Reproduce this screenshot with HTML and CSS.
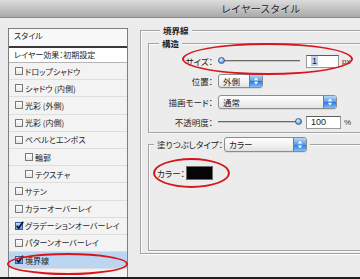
FILE: index.html
```html
<!DOCTYPE html>
<html>

<head>
    <meta charset="UTF-8">
    <meta name="viewport" content="width=device-width, initial-scale=1.0">
    <title>レイヤースタイル</title>
    <link rel="stylesheet" href="styles.css">
</head>

<body>
    <div class="window">
        <div class="titlebar">レイヤースタイル</div>
        <div class="content">
            <div class="style-list">
                <div class="list-head">スタイル</div>
                <div class="list-default">レイヤー効果：初期設定</div>
                <div class="list-item"><span class="check"></span>ドロップシャドウ</div>
                <div class="list-item"><span class="check"></span>シャドウ (内側)</div>
                <div class="list-item"><span class="check"></span>光彩 (外側)</div>
                <div class="list-item"><span class="check"></span>光彩 (内側)</div>
                <div class="list-item"><span class="check"></span>ベベルとエンボス</div>
                <div class="list-item indent"><span class="check"></span>輪郭</div>
                <div class="list-item indent"><span class="check"></span>テクスチャ</div>
                <div class="list-item"><span class="check"></span>サテン</div>
                <div class="list-item"><span class="check"></span>カラーオーバーレイ</div>
                <div class="list-item"><span class="check on"><svg viewBox="0 0 8 8"><path d="M1.5 4.2 L3.3 6.3 L7.2 0.6" /></svg></span>グラデーションオーバーレイ</div>
                <div class="list-item"><span class="check"></span>パターンオーバーレイ</div>
                <div class="list-item selected"><span class="check on"><svg viewBox="0 0 8 8"><path d="M1.5 4.2 L3.3 6.3 L7.2 0.6" /></svg></span>境界線</div>
            </div>

            <div class="settings">
                <div class="group outer">
                    <div class="group-title bold">境界線</div>

                    <div class="group structure">
                        <div class="group-title bold">構造</div>
                        <div class="form">
                            <div class="label">サイズ：</div>
                            <div class="control">
                                <div class="slider"><span class="knob"></span></div>
                                <span class="field"><span class="sel">1</span></span>
                                <span class="unit">px</span>
                            </div>

                            <div class="label">位置：</div>
                            <div class="control">
                                <span class="popup short">外側<svg class="stepper" viewBox="0 0 12 14"><path d="M3.5 6 L6 3 L8.5 6 Z M3.5 8 L6 11 L8.5 8 Z" /></svg></span>
                            </div>

                            <div class="label">描画モード：</div>
                            <div class="control">
                                <span class="popup long">通常<svg class="stepper" viewBox="0 0 12 14"><path d="M3.5 6 L6 3 L8.5 6 Z M3.5 8 L6 11 L8.5 8 Z" /></svg></span>
                            </div>

                            <div class="label">不透明度：</div>
                            <div class="control">
                                <div class="slider end"><span class="knob"></span></div>
                                <span class="field wide">100</span>
                                <span class="unit">%</span>
                            </div>
                        </div>
                    </div>

                    <div class="group fill">
                        <div class="group-title">塗りつぶしタイプ：<span class="popup mid">カラー<svg class="stepper" viewBox="0 0 12 14"><path d="M3.5 6 L6 3 L8.5 6 Z M3.5 8 L6 11 L8.5 8 Z" /></svg></span></div>
                        <div class="color-row">カラー：<span class="swatch"></span></div>
                    </div>
                </div>
            </div>
        </div>

        <!-- red marks drawn over the screenshot -->
        <div class="mark mark-size"></div>
        <div class="mark mark-color"></div>
        <div class="mark mark-stroke"></div>
    </div>
</body>

</html>
```

FILE: styles.css
```css
body {
    margin: 0;
    background-color: #ececec;
    font-family: "Noto Sans CJK JP", "Noto Sans", sans-serif;
    color: #1c1c1c;
}

.window {
    position: relative;
    width: 360px;
    height: 279px;
    box-sizing: border-box;
    border-bottom: 2px solid #1e1e1e;
    overflow: hidden;
    display: flex;
    flex-direction: column;
    background-color: #ececec;
}

.titlebar {
    height: 17px;
    line-height: 17px;
    padding-left: 221px;
    font-size: 10px;
    color: #222;
    background: linear-gradient(to bottom, #dcdcdc, #b9b9b9 70%, #a9a9a9);
    border-bottom: 1px solid #8a8a8a;
    text-shadow: 0 1px 0 rgba(255,255,255,0.4);
}

.content {
    flex: 1;
    display: flex;
    align-items: flex-start;
    padding: 10px 0 0 8px;
    min-height: 0;
}

/* left column */
.style-list {
    width: 120px;
    height: 100%;
    box-sizing: border-box;
    border: 1px solid #7e7e7e;
    border-bottom: none;
    background-color: #f3f3f3;
    font-size: 8px;
    font-feature-settings: "palt";
    flex-shrink: 0;
}

.list-head {
    height: 17px;
    line-height: 13px;
    padding-left: 5px;
    background-color: #f8f8f8;
    border-bottom: 2px solid #3a3a3a;
}

.list-default {
    height: 15px;
    line-height: 14px;
    padding-left: 5px;
    box-sizing: border-box;
    background-color: #fff;
    border-bottom: 1px solid #b4b4b4;
}

.list-item {
    height: 17.2px;
    box-sizing: border-box;
    display: flex;
    align-items: center;
    padding-left: 6px;
    border-bottom: 1px solid #dedede;
}

.list-item.indent {
    padding-left: 16px;
}

.list-item.selected {
    background-color: #bcd5f1;
}

.check {
    width: 8px;
    height: 8px;
    box-sizing: border-box;
    margin-right: 2px;
    border: 1px solid #7a7a7a;
    background: linear-gradient(to bottom, #fff, #e4e4e4);
    flex-shrink: 0;
    position: relative;
}

.check.on {
    border-color: #35609a;
    background: linear-gradient(to bottom, #c9defa, #5a95e0);
}

.check svg {
    position: absolute;
    left: -1px;
    top: -2px;
    width: 9px;
    height: 9px;
    fill: none;
    stroke: #101830;
    stroke-width: 1.6;
}

/* right column */
.settings {
    margin: 2px 0 0 12px;
    font-size: 8.5px;
    font-feature-settings: "palt";
}

.group {
    border: 1px solid #a4a4a4;
    box-shadow: inset 1px 1px 0 #fbfbfb, 1px 1px 0 #fbfbfb;
    display: flex;
    flex-direction: column;
}

.group.outer {
    width: 240px;
    height: 224px;
    box-sizing: border-box;
    padding: 0 0 2px 7px;
}

.group-title {
    align-self: flex-start;
    line-height: 12px;
    margin: -7px 0 0 12px;
    padding: 0 3px;
    background-color: #ececec;
}

.bold {
    font-weight: bold;
}

.structure {
    margin-top: 7px;
    padding-bottom: 3px;
}

.structure .group-title {
    margin-left: 10px;
}

.form {
    margin-top: 5px;
    display: grid;
    grid-template-columns: 64px 1fr;
    grid-auto-rows: 14px;
    column-gap: 5px;
    row-gap: 6.4px;
}

.label {
    text-align: right;
    line-height: 14px;
}

.control {
    display: flex;
    align-items: center;
}

.slider {
    width: 82px;
    height: 14px;
    display: flex;
    align-items: center;
    background: linear-gradient(to bottom, transparent 6px, #6a6a6a 6px, #6a6a6a 7px, #c4c4c4 7px, #c4c4c4 8px, transparent 8px);
}

.slider.end {
    justify-content: flex-end;
    width: 84px;
}

.knob {
    width: 7px;
    height: 7px;
    box-sizing: border-box;
    margin-top: -2px;
    border-radius: 50% 50% 50% 50%;
    border: 1px solid #3c5f8e;
    background: radial-gradient(circle at 40% 35%, #eaf4ff, #77aee8 55%, #3570bd);
}

.field {
    width: 33px;
    height: 13px;
    box-sizing: border-box;
    margin-left: 6px;
    padding-left: 4px;
    line-height: 11px;
    font-family: "Liberation Sans", Arial, sans-serif;
    font-size: 9px;
    background-color: #fff;
    border: 1px solid #9a9a9a;
    border-top-color: #5c5c5c;
}

.control .slider.end + .field {
    margin-left: 4px;
}

.field.wide {
    width: 35px;
}

.sel {
    background-color: #b8d4f4;
    padding: 0 1px;
}

.unit {
    margin-left: 3px;
    font-family: "Liberation Sans", Arial, sans-serif;
    font-size: 8px;
    color: #333;
}

.popup {
    height: 14px;
    box-sizing: border-box;
    display: inline-flex;
    align-items: center;
    justify-content: space-between;
    padding-left: 4px;
    border: 1px solid #8c8c8c;
    border-radius: 3px;
    background: linear-gradient(to bottom, #ffffff, #f0f0f0 60%, #e2e2e2);
    box-shadow: 0 1px 0 rgba(0,0,0,0.08);
    overflow: hidden;
}

.popup.short {
    width: 45px;
}

.popup.long {
    width: 119px;
}

.popup.mid {
    width: 83px;
    height: 15px;
}

.stepper {
    width: 12px;
    height: 100%;
    background: linear-gradient(to bottom, #b6d6fb, #5a9cea 50%, #2f78d6 52%, #7fc0f8);
    border-left: 1px solid #5a7fae;
    fill: #fff;
}

.fill {
    flex: 1;
    margin-top: 11px;
}

.fill .group-title {
    display: flex;
    align-items: center;
    gap: 1px;
    line-height: 15px;
    margin: -8px 0 0 5px;
}

.color-row {
    display: flex;
    align-items: center;
    height: 14px;
    margin-top: 14px;
    padding-left: 8px;
}

.swatch {
    width: 27px;
    height: 14px;
    box-sizing: border-box;
    margin-left: 1px;
    background-color: #050505;
    border: 1px solid #6b6b6b;
}

/* red ellipses */
.mark {
    position: absolute;
    border: 2px solid #d8141c;
    border-radius: 50%;
    box-sizing: border-box;
}

.mark-size {
    left: 182px;
    top: 43px;
    width: 171px;
    height: 32px;
}

.mark-color {
    left: 153px;
    top: 158px;
    width: 77px;
    height: 30px;
}

.mark-stroke {
    left: 7px;
    top: 253px;
    width: 121px;
    height: 22px;
}
```
